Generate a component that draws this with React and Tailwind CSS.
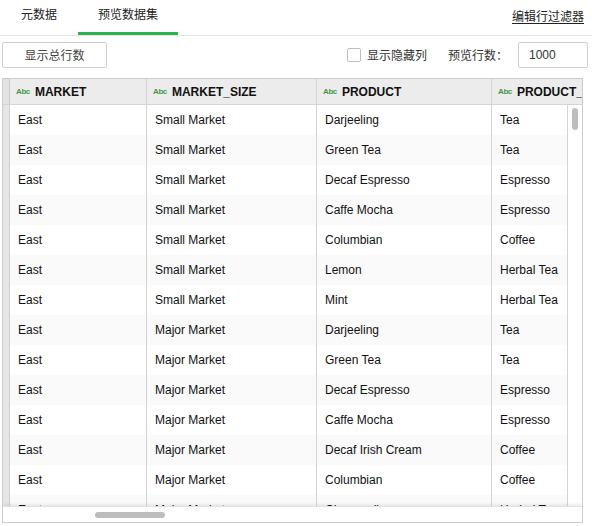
const rows = [
  ['East', 'Small Market', 'Darjeeling', 'Tea'],
  ['East', 'Small Market', 'Green Tea', 'Tea'],
  ['East', 'Small Market', 'Decaf Espresso', 'Espresso'],
  ['East', 'Small Market', 'Caffe Mocha', 'Espresso'],
  ['East', 'Small Market', 'Columbian', 'Coffee'],
  ['East', 'Small Market', 'Lemon', 'Herbal Tea'],
  ['East', 'Small Market', 'Mint', 'Herbal Tea'],
  ['East', 'Major Market', 'Darjeeling', 'Tea'],
  ['East', 'Major Market', 'Green Tea', 'Tea'],
  ['East', 'Major Market', 'Decaf Espresso', 'Espresso'],
  ['East', 'Major Market', 'Caffe Mocha', 'Espresso'],
  ['East', 'Major Market', 'Decaf Irish Cream', 'Coffee'],
  ['East', 'Major Market', 'Columbian', 'Coffee'],
  ['East', 'Major Market', 'Chamomile', 'Herbal Tea'],
];

const cols = [
  { name: 'MARKET', w: 'w-[137px]' },
  { name: 'MARKET_SIZE', w: 'w-[170px]' },
  { name: 'PRODUCT', w: 'w-[175px]' },
  { name: 'PRODUCT_TYPE', w: 'w-[120px]' },
];

const HeaderCell = ({ name, w }) => (
  <div className={`${w} shrink-0 h-full flex items-center pl-[6px] border-r border-[#d4d4d4] overflow-hidden whitespace-nowrap`}>
    <span className="text-[8px] leading-none font-bold text-[#3f9a45] mr-[5px] tracking-[-0.4px]">Abc</span>
    <span className="text-[12px] font-bold text-[#111]">{name}</span>
  </div>
);

export default function App() {
  return (
    <div className="w-[592px] h-[526px] bg-white overflow-hidden font-['Liberation_Sans','Noto_Sans_CJK_SC',sans-serif] text-[#222]">
      {/* tabs */}
      <div className="h-[36px] flex items-end border-b border-[#e4e4e4] relative">
        <div className="w-[78px] h-full flex items-center justify-center pb-[8px] text-[12px] font-['Noto_Sans_CJK_SC',sans-serif] text-[#222]">元数据</div>
        <div className="w-[100px] h-full flex items-center justify-center pb-[5px] border-b-[3px] border-[#27b24d] text-[12px] font-['Noto_Sans_CJK_SC',sans-serif] text-[#222]">预览数据集</div>
        <div className="ml-auto mr-[8px] h-full flex items-center pb-[4px]">
          <span className="text-[12px] underline underline-offset-2 font-['Noto_Sans_CJK_SC',sans-serif] text-[#222]">编辑行过滤器</span>
        </div>
      </div>

      {/* toolbar */}
      <div className="mt-[6px] h-[26px] flex items-center pl-[2px] pr-[4px] font-['Noto_Sans_CJK_SC',sans-serif]">
        <button className="w-[105px] h-[26px] border border-[#cfcfcf] rounded-[2px] text-[12px] text-[#444] bg-white">显示总行数</button>
        <div className="ml-auto flex items-center">
          <span className="w-[14px] h-[14px] border border-[#bdbdbd] rounded-[2px] bg-white"></span>
          <span className="ml-[6px] text-[12px] text-[#333]">显示隐藏列</span>
          <span className="ml-[21px] text-[12px] text-[#333]">预览行数：</span>
          <div className="ml-[10px] w-[70px] h-[26px] border border-[#cfcfcf] rounded-[2px] flex items-center pl-[10px] text-[12px] text-[#333] font-['Liberation_Sans',sans-serif]">1000</div>
        </div>
      </div>

      {/* table */}
      <div className="mt-[10px] ml-[2px] w-[581px] h-[445px] border border-[#cccccc] flex flex-col overflow-hidden">
        <div className="h-[26px] shrink-0 flex bg-[#ececec] border-b border-[#d4d4d4] overflow-hidden">
          <div className="w-[7px] shrink-0 h-full bg-[#e2e2e2] border-r border-[#cfcfcf]"></div>
          {cols.map((c) => (
            <HeaderCell key={c.name} {...c} />
          ))}
        </div>
        <div className="flex-1 flex min-h-0">
          <div className="w-[7px] shrink-0 bg-[#e6e6e6] border-r border-[#cfcfcf]"></div>
          <div className="w-[557px] overflow-hidden">
            {rows.map((r, i) => (
              <div key={i} className={`h-[30px] flex ${i % 2 ? 'bg-[#fafafa]' : 'bg-white'}`}>
                {r.map((v, j) => (
                  <div key={j} className={`${cols[j].w} shrink-0 h-full flex items-center pl-[8px] border-r border-[#d4d4d4] text-[12px] text-[#111] whitespace-nowrap overflow-hidden`}>
                    {v}
                  </div>
                ))}
              </div>
            ))}
          </div>
          <div className="w-[15px] shrink-0 border-l border-[#d4d4d4] bg-white pt-[3px] flex justify-center">
            <div className="w-[6px] h-[22px] rounded-full bg-[#bdbdbd]"></div>
          </div>
        </div>
        <div className="h-[16px] shrink-0 bg-white shadow-[0_-2px_3px_rgba(0,0,0,0.08)] border-t border-[#e2e2e2] flex items-center pl-[92px] relative">
          <div className="w-[70px] h-[6px] rounded-full bg-[#bdbdbd]"></div>
        </div>
      </div>
    </div>
  );
}
